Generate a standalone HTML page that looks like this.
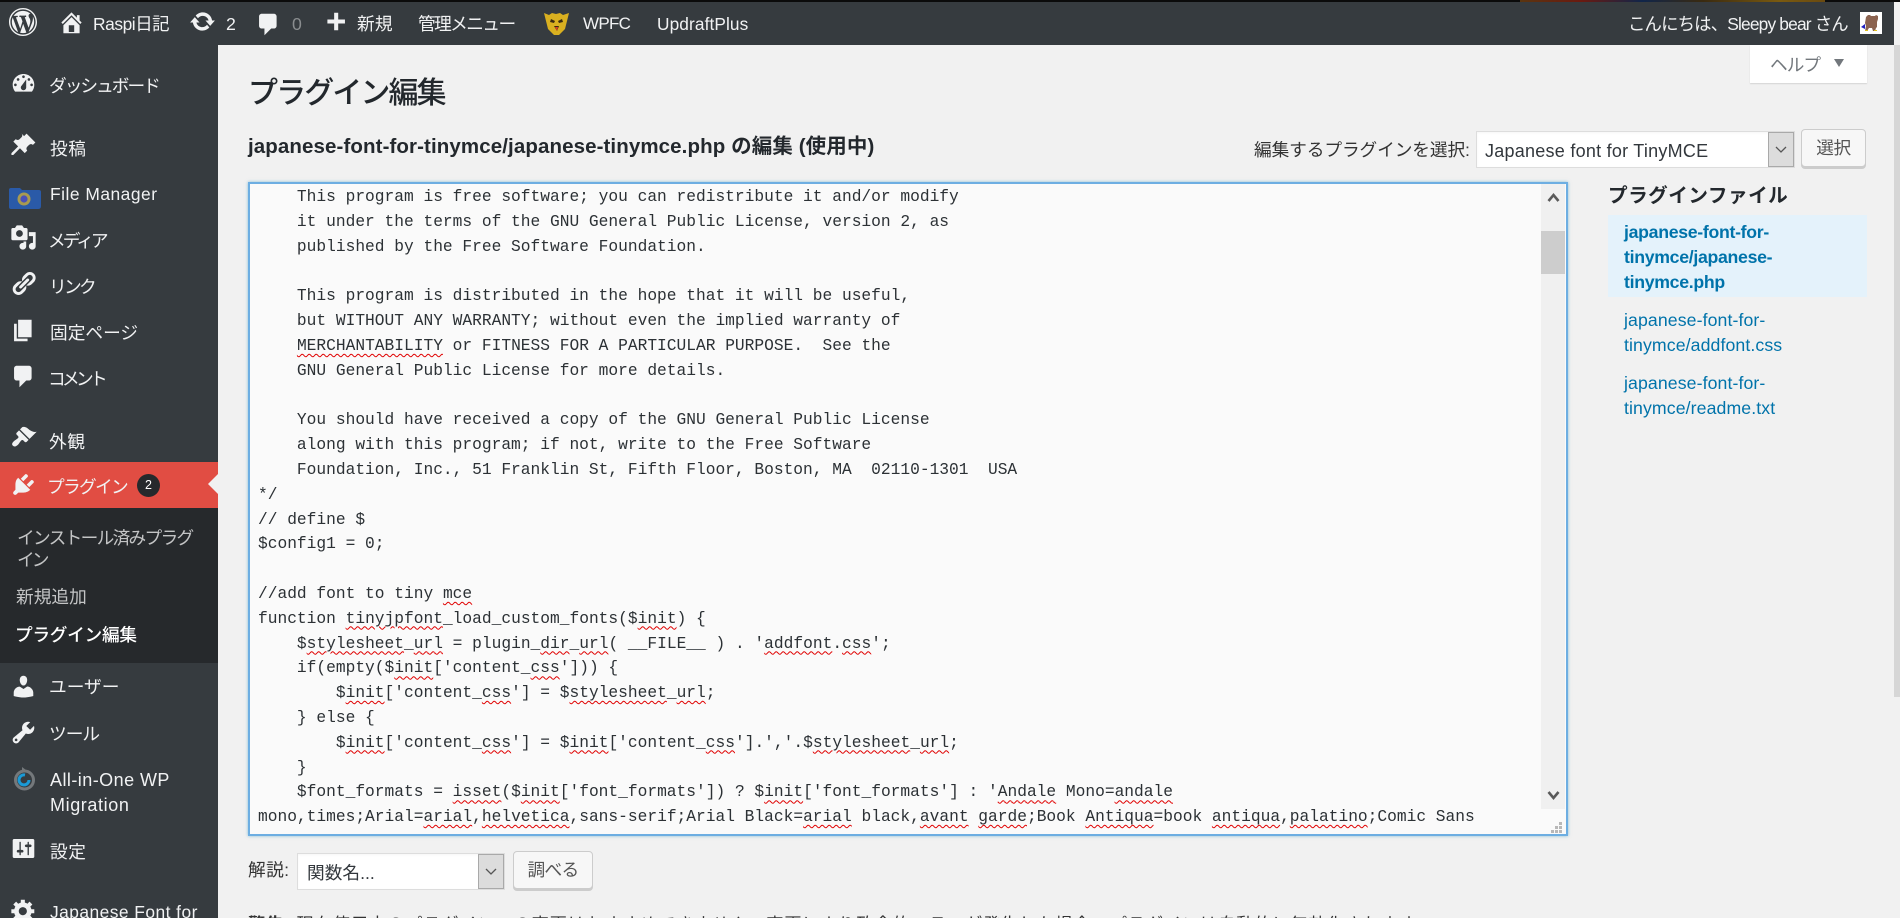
<!DOCTYPE html>
<html lang="ja">
<head>
<meta charset="utf-8">
<title>プラグイン編集</title>
<style>
html,body{margin:0;padding:0;width:1900px;height:918px;overflow:hidden;background:#f1f1f1}
body{position:relative;font-family:"Liberation Sans","Noto Sans CJK JP",sans-serif;font-size:17.7px;color:#444}
div,span,svg,pre{box-sizing:border-box}
.a{position:absolute}
.t{position:absolute;white-space:nowrap;line-height:24px;height:24px}
#bar{position:absolute;left:0;top:0;width:1894px;height:45px;background:#363b3f}
#strip{position:absolute;left:0;top:0;width:1900px;height:2px;background:#0b0b0b}
#strip2{position:absolute;left:1520px;top:0;width:305px;height:2px;background:linear-gradient(90deg,#5a3510,#6b1a10 20%,#10254a 40%,#3a2a10 60%,#7a5a10 85%,#6a4a10)}
#side{position:absolute;left:0;top:45px;width:218px;height:873px;background:#363b3f}
#cur{position:absolute;left:0;top:462px;width:218px;height:46px;background:#e14d43}
#sub{position:absolute;left:0;top:508px;width:218px;height:155px;background:#26292c}
.w{color:#f1f2f3}
.b svg,svg.i{position:absolute;fill:#f1f2f3}
.m{color:#f1f2f3}
.s{color:#c3c4c5}
#ed{position:absolute;left:248px;top:182px;width:1320px;height:654px;background:#fafafa;border:2px solid #6daee2;box-shadow:0 0 3px rgba(30,140,190,.5);overflow:hidden}
#code{position:absolute;left:258px;top:185.2px;margin:0;font-family:"Liberation Mono",monospace;font-size:16.23px;line-height:24.8px;color:#2c3135;white-space:pre;height:650px;overflow:hidden;width:1290px;tab-size:4}
#code u{text-decoration:underline wavy #e00000 1px;text-underline-offset:3px}
#sb{position:absolute;left:1541px;top:184px;width:24px;height:625px;background:#f0f0f0}
#th{position:absolute;left:1541px;top:231px;width:24px;height:43px;background:#cdcdcd}
.sel{position:absolute;background:#fff;border:1px solid #ddd;box-shadow:inset 0 1px 2px rgba(0,0,0,.04)}
.arr{position:absolute;background:#dcdcdc;border:1px solid #a9a9a9}
.btn{position:absolute;background:#f7f7f7;border:1px solid #ccc;border-radius:4px;box-shadow:0 2px 0 #ccc;color:#555}
a{color:#0073aa;text-decoration:none}
</style>
</head>
<body>
<div id="side"></div>
<div id="cur"></div>
<div id="sub"></div>
<div id="bar"></div>
<div id="strip"></div>
<div id="strip2"></div>

<!-- page scrollbar -->
<div class="a" style="left:1894px;top:2px;width:6px;height:916px;background:#f1f1f1"></div>
<div class="a" style="left:1894px;top:45px;width:6px;height:652px;background:#d6d6d6"></div>

<!-- admin bar icons -->
<svg class="i" style="left:9px;top:8px;width:28px;height:28px" viewBox="0 0 20 20"><path fill-rule="evenodd" d="M20 10c0-5.52-4.48-10-10-10S0 4.48 0 10s4.48 10 10 10 10-4.48 10-10zM10 1.01c4.96 0 8.99 4.03 8.99 8.99s-4.03 8.99-8.99 8.99S1.01 14.96 1.01 10 5.04 1.01 10 1.01zM8.01 14.82L4.96 6.61c.49-.03 1.05-.08 1.05-.08.43-.05.38-1.01-.06-.99 0 0-1.29.1-2.13.1-.15 0-.33 0-.52-.01 1.44-2.17 3.9-3.6 6.7-3.6 2.09 0 3.99.79 5.41 2.09-.6-.08-1.45.35-1.45 1.42 0 .66.38 1.22.79 1.88.31.54.5 1.22.5 2.21 0 1.34-1.27 4.48-1.27 4.48l-2.71-7.5c.48-.03.75-.16.75-.16.43-.05.38-1.1-.05-1.08 0 0-1.3.11-2.14.11-.78 0-2.11-.11-2.11-.11-.43-.02-.48 1.06-.05 1.08l.84.08 1.12 3.04zm6.02 2.15L16.64 10s.67-1.69.39-3.81c.63 1.14.94 2.42.94 3.81 0 2.96-1.56 5.58-3.94 6.97zM2.68 6.77L6.5 17.25c-2.67-1.3-4.47-4.08-4.47-7.25 0-1.16.2-2.23.65-3.23zm7.45 4.53l2.29 6.25c-.75.27-1.57.42-2.42.42-.72 0-1.41-.11-2.06-.3z"/></svg>
<svg class="i" style="left:58px;top:9px;width:27px;height:27px" viewBox="0 0 20 20"><path fill-rule="evenodd" d="M16 8.5l1.53 1.53-1.06 1.06L10 4.62l-6.47 6.47-1.06-1.06L10 2.5l4 4v-2h2v4zm-6-2.46l6 5.99V18H4v-5.97zM12 17v-5H8v5h4z"/></svg>
<div class="t w" style="left:93px;top:12px;font-size:17.4px;letter-spacing:-.45px">Raspi日記</div>
<svg class="i" style="left:189px;top:8px;width:27px;height:27px" viewBox="0 0 20 20"><path d="M10.2 3.28c3.53 0 6.43 2.61 6.92 6h2.08l-3.5 4-3.5-4h2.32c-.45-1.97-2.21-3.45-4.32-3.45-1.45 0-2.73.71-3.54 1.78L4.95 5.66C6.23 4.2 8.11 3.28 10.2 3.28zm-.4 13.44c-3.52 0-6.43-2.61-6.92-6H.8l3.5-4c1.17 1.33 2.33 2.67 3.5 4H5.48c.45 1.97 2.21 3.45 4.32 3.45 1.45 0 2.73-.71 3.54-1.78l1.71 1.95c-1.28 1.46-3.15 2.38-5.25 2.38z"/></svg>
<div class="t w" style="left:226px;top:12px">2</div>
<svg class="i" style="left:255px;top:11px;width:27px;height:27px" viewBox="0 0 20 20"><path d="M5 2h9c1.1 0 2 .9 2 2v7c0 1.1-.9 2-2 2h-2l-5 5v-5H5c-1.1 0-2-.9-2-2V4c0-1.1.9-2 2-2z"/></svg>
<div class="t" style="left:292px;top:12px;color:#8a8d8f">0</div>
<svg class="i" style="left:322px;top:10px;width:27px;height:27px" viewBox="0 0 20 20"><path d="M17 7v3h-5v5H9v-5H4V7h5V2h3v5h5z"/></svg>
<div class="t w" style="left:357px;top:12px;font-size:17.7px;letter-spacing:.2px">新規</div>
<div class="t w" style="left:418px;top:12px;font-size:17.7px;letter-spacing:-1.6px">管理メニュー</div>
<svg class="a" style="left:543px;top:12px;width:27px;height:24px" viewBox="0 0 27 24"><path fill="#d9b020" d="M1 1l5 2 3-2 4 1 4-1 3 2 6-2-2 8-2 8-6 6h-5l-6-6-2-8z"/><path fill="#3a2a10" d="M8 7l4 2-1 2-4-1zM19 7l-4 2 1 2 4-1zM11 14h5l-2 5z"/><path fill="#d8402a" d="M12 15h3l-1 4z"/></svg>
<div class="t w" style="left:583px;top:12px;font-size:17px;letter-spacing:-.7px">WPFC</div>
<div class="t w" style="left:657px;top:12px;font-size:17.3px;letter-spacing:.1px">UpdraftPlus</div>
<div class="t w" style="left:1628px;top:12px;font-size:17.4px;letter-spacing:-.85px">こんにちは、Sleepy bear さん</div>
<svg class="a" style="left:1860px;top:12px;width:22px;height:22px" viewBox="0 0 22 22"><rect width="22" height="22" fill="#fff"/><path fill="#8b6350" d="M6 5l2-2h2l1 1h4l1-1 2 1v3l-1 3v5l-1 1-1 3h-2l-1-3H9l-2 3H5l1-5-1-3z"/><path fill="#2020c0" d="M1 15l4-3v5z"/><path fill="#e0c020" d="M5 18h3v1H5zM14 18h3v1h-3z"/></svg>

<!-- sidebar icons -->
<svg class="i" style="left:10px;top:70px;width:27px;height:27px" viewBox="0 0 20 20"><path fill-rule="evenodd" d="M3.76 16h12.48c1.1-1.37 1.76-3.11 1.76-5 0-4.42-3.58-8-8-8s-8 3.58-8 8c0 1.89.66 3.63 1.76 5zM10 4c.55 0 1 .45 1 1s-.45 1-1 1-1-.45-1-1 .45-1 1-1zM6 6c.55 0 1 .45 1 1s-.45 1-1 1-1-.45-1-1 .45-1 1-1zm8 0c.55 0 1 .45 1 1s-.45 1-1 1-1-.45-1-1 .45-1 1-1zm-5.37 5.55L12 7v6c0 1.1-.9 2-2 2s-2-.9-2-2c0-.57.24-1.08.63-1.45zM4 10c.55 0 1 .45 1 1s-.45 1-1 1-1-.45-1-1 .45-1 1-1zm12 0c.55 0 1 .45 1 1s-.45 1-1 1-1-.45-1-1 .45-1 1-1z"/></svg>
<svg class="i" style="left:10px;top:132px;width:27px;height:27px" viewBox="0 0 20 20"><path d="M10.44 3.02l1.82-1.82 6.54 6.54-1.82 1.82c-.78-.78-2.05-.78-2.83 0l-1.41 1.41c-.78.78-.78 2.05 0 2.83l-1.82 1.82-3.54-3.54-4.95 4.95H1.06v-1.41l4.95-4.95-3.54-3.54 1.82-1.82c.78.78 2.05.78 2.83 0l1.41-1.41c.78-.78.78-2.05 0-2.83z"/></svg>
<svg class="a" style="left:8px;top:187px;width:33px;height:22px" viewBox="0 0 33 22"><path fill="#2a5aa8" d="M1 3q0-2 2-2h9l2 2h17q2 0 2 2v14q0 3-3 3H3q-2 0-2-2z"/><circle cx="16" cy="12" r="6.5" fill="#a89a50"/><circle cx="16" cy="12" r="3.6" fill="#4a50b8"/></svg>
<svg class="i" style="left:10px;top:224px;width:27px;height:27px" viewBox="0 0 20 20"><path fill-rule="evenodd" d="M13 11V4c0-.55-.45-1-1-1h-1.67L9 1H5L3.67 3H2c-.55 0-1 .45-1 1v7c0 .55.45 1 1 1h10c.55 0 1-.45 1-1zM7 4.5c1.38 0 2.5 1.12 2.5 2.5S8.38 9.5 7 9.5 4.5 8.38 4.5 7 5.62 4.5 7 4.5zM14 6h5v10.5c0 1.38-1.12 2.5-2.5 2.5S14 17.88 14 16.5s1.12-2.5 2.5-2.5c.17 0 .34.02.5.05V9h-3V6zm-4 8.05V13h2v3.5c0 1.38-1.12 2.5-2.5 2.5S7 17.88 7 16.5 8.12 14 9.5 14c.17 0 .34.02.5.05z"/></svg>
<svg class="i" style="left:10px;top:270px;width:27px;height:27px" viewBox="0 0 20 20"><path d="M17.74 2.76c1.68 1.69 1.68 4.41 0 6.1l-1.53 1.52c-1.12 1.12-2.7 1.47-4.14 1.09l2.62-2.61.76-.77.76-.76c.84-.84.84-2.2 0-3.04-.84-.85-2.2-.85-3.04 0l-.77.76-3.38 3.38c-.37-1.44-.02-3.02 1.1-4.14l1.52-1.53c1.69-1.68 4.42-1.68 6.1 0zM8.59 13.43l5.34-5.34c.42-.42.42-1.1 0-1.52-.44-.43-1.13-.39-1.53 0l-5.33 5.34c-.42.42-.42 1.1 0 1.52.44.43 1.13.39 1.52 0zm-.76 2.29l4.14-4.15c.38 1.44.03 3.02-1.09 4.14l-1.52 1.53c-1.69 1.68-4.41 1.68-6.1 0-1.68-1.68-1.68-4.42 0-6.1l1.53-1.52c1.12-1.12 2.7-1.47 4.14-1.1l-4.14 4.15c-.85.84-.85 2.2 0 3.05.84.84 2.2.84 3.04 0z"/></svg>
<svg class="i" style="left:10px;top:317px;width:27px;height:27px" viewBox="0 0 20 20"><path d="M6 15V2h10v13H6zm-1 1h8v2H3V5h2v11z"/></svg>
<svg class="i" style="left:10px;top:363px;width:27px;height:27px" viewBox="0 0 20 20"><path d="M5 2h9c1.1 0 2 .9 2 2v7c0 1.1-.9 2-2 2h-2l-5 5v-5H5c-1.1 0-2-.9-2-2V4c0-1.1.9-2 2-2z"/></svg>
<svg class="i" style="left:10px;top:424px;width:27px;height:27px" viewBox="0 0 20 20"><path d="M14.48 11.06L7.41 3.99l1.5-1.5c.5-.56 2.3-.47 3.51.32 1.21.8 1.43 1.28 2.91 2.1 1.18.64 2.45 1.26 4.45.85zm-.71.71L6.7 4.7 4.93 6.47c-.39.39-.39 1.02 0 1.41l1.06 1.06c.39.39.39 1.03 0 1.42-.6.6-1.43 1.11-2.21 1.69-.35.26-.7.53-1.01.84-1.05 1.05-1.72 2.08-.67 3.13 1.27 1.27 2.79.35 3.79-.65.31-.31.58-.66.84-1.01.58-.78 1.09-1.61 1.69-2.21.39-.39 1.03-.39 1.42 0l1.06 1.06c.39.39 1.02.39 1.41 0z"/></svg>
<svg class="i" style="left:10px;top:471px;width:27px;height:27px" viewBox="0 0 20 20"><path d="M13.11 4.36L9.87 7.6 8 5.73l3.24-3.24c.35-.34 1.05-.2 1.56.32.52.51.66 1.21.31 1.55zm-8 1.77l.91-1.12 9.01 9.01-1.19.84c-.71.71-2.63 1.16-3.82 1.16H6.14L4.9 17.26c-.59.59-1.54.59-2.12 0-.59-.58-.59-1.53 0-2.12l1.24-1.24v-3.88c0-1.13.4-3.19 1.09-3.89zm7.26 3.97l3.24-3.24c.34-.35 1.04-.21 1.55.31.52.51.66 1.21.31 1.55l-3.24 3.25z"/></svg>
<svg class="i" style="left:10px;top:673px;width:27px;height:27px" viewBox="0 0 20 20"><path d="M10 9.25c-2.27 0-2.73-3.44-2.73-3.44C7 4.02 7.82 2 9.97 2c2.16 0 2.98 2.02 2.71 3.81 0 0-.41 3.44-2.68 3.44zm0 2.57L12.72 10c2.39 0 4.52 2.33 4.52 4.53v2.49s-3.65 1.13-7.24 1.13c-3.65 0-7.24-1.13-7.24-1.13v-2.49c0-2.25 1.94-4.48 4.47-4.48z"/></svg>
<svg class="i" style="left:10px;top:719px;width:27px;height:27px" viewBox="0 0 20 20"><path fill-rule="evenodd" d="M16.68 9.77c-1.34 1.34-3.3 1.67-4.95.99l-5.41 6.52c-.99.99-2.59.99-3.58 0s-.99-2.59 0-3.57l6.52-5.42c-.68-1.65-.35-3.61.99-4.95 1.28-1.28 3.12-1.62 4.72-1.06l-2.89 2.89 2.82 2.82 2.86-2.87c.53 1.58.18 3.39-1.08 4.67zM3.81 16.21c.4.39 1.04.39 1.43 0 .4-.4.4-1.04 0-1.43-.39-.4-1.03-.4-1.43 0-.39.39-.39 1.03 0 1.43z"/></svg>
<svg class="a" style="left:13px;top:766px;width:23px;height:26px" viewBox="0 0 23 26"><circle cx="11.5" cy="14" r="9" fill="none" stroke="#74787b" stroke-width="3"/><path d="M9 1l4 3-4 3z" fill="#74787b"/><path d="M16 14a5 5 0 1 1-4-5" fill="none" stroke="#1a9ad6" stroke-width="3"/></svg>
<svg class="i" style="left:10px;top:835px;width:27px;height:27px" viewBox="0 0 20 20"><path fill-rule="evenodd" d="M18 16V4c0-.55-.45-1-1-1H3c-.55 0-1 .45-1 1v12c0 .55.45 1 1 1h14c.55 0 1-.45 1-1zM8 11h1c.55 0 1 .45 1 1s-.45 1-1 1H8v1.5c0 .28-.22.5-.5.5s-.5-.22-.5-.5V13H6c-.55 0-1-.45-1-1s.45-1 1-1h1V5.5c0-.28.22-.5.5-.5s.5.22.5.5V11zm5-2h-1c-.55 0-1-.45-1-1s.45-1 1-1h1V5.5c0-.28.22-.5.5-.5s.5.22.5.5V7h1c.55 0 1 .45 1 1s-.45 1-1 1h-1v5.5c0 .28-.22.5-.5.5s-.5-.22-.5-.5V9z"/></svg>
<svg class="i" style="left:10px;top:897px;width:27px;height:27px" viewBox="0 0 20 20"><path fill-rule="evenodd" d="M18 12h-2.18c-.17.7-.44 1.35-.81 1.93l1.54 1.54-2.1 2.1-1.54-1.54c-.58.36-1.23.63-1.91.79V19H8v-2.18c-.68-.16-1.33-.43-1.91-.79l-1.54 1.54-2.12-2.12 1.54-1.54c-.36-.58-.63-1.23-.79-1.91H1V9.03h2.17c.16-.7.44-1.35.8-1.94L2.43 5.55l2.1-2.1 1.54 1.54c.58-.37 1.24-.64 1.93-.81V2h3v2.18c.68.16 1.33.43 1.91.79l1.54-1.54 2.12 2.12-1.54 1.54c.36.59.64 1.24.8 1.94H18V12zm-8.5 1.5c1.66 0 3-1.34 3-3s-1.34-3-3-3-3 1.34-3 3 1.34 3 3 3z"/></svg>

<!-- sidebar labels -->
<div class="t m" style="left:49px;top:74px;letter-spacing:-2px">ダッシュボード</div>
<div class="t m" style="left:50px;top:137px;letter-spacing:.5px">投稿</div>
<div class="t m" style="left:50px;top:182px;font-size:17.4px;letter-spacing:.5px">File Manager</div>
<div class="t m" style="left:48px;top:229px;letter-spacing:-3px">メディア</div>
<div class="t m" style="left:49px;top:275px;letter-spacing:-2.7px">リンク</div>
<div class="t m" style="left:50px;top:321px">固定ページ</div>
<div class="t m" style="left:48px;top:367px;letter-spacing:-3.7px">コメント</div>
<div class="t m" style="left:49px;top:430px;letter-spacing:.5px">外観</div>
<div class="t w" style="left:47px;top:475px;letter-spacing:-1.7px">プラグイン</div>
<div class="a" style="left:137px;top:474px;width:23px;height:23px;border-radius:50%;background:#26292c;color:#fff;font-size:12.5px;line-height:23px;text-align:center">2</div>
<div class="a" style="left:208px;top:474px;width:0;height:0;border-top:10px solid transparent;border-bottom:10px solid transparent;border-right:10px solid #f1f1f1"></div>
<div class="t s" style="left:17px;top:526px;letter-spacing:-1.7px">インストール済みプラグ</div>
<div class="t s" style="left:17px;top:548px;letter-spacing:-3px">イン</div>
<div class="t s" style="left:16px;top:585px">新規追加</div>
<div class="t" style="left:15px;top:623px;color:#fff;font-weight:500;letter-spacing:-.3px">プラグイン編集</div>
<div class="t m" style="left:49px;top:675px">ユーザー</div>
<div class="t m" style="left:49px;top:722px;letter-spacing:-1px">ツール</div>
<div class="t m" style="left:50px;top:768px;font-size:18px;letter-spacing:.45px">All-in-One WP</div>
<div class="t m" style="left:50px;top:793px;font-size:18px;letter-spacing:.6px">Migration</div>
<div class="t m" style="left:50px;top:840px;letter-spacing:.5px">設定</div>
<div class="t m" style="left:50px;top:900px;font-size:17.4px;letter-spacing:.45px">Japanese Font for</div>

<!-- heading area -->
<div class="a" style="left:1750px;top:45px;width:117px;height:38px;background:#fff;box-shadow:0 1px 1px rgba(0,0,0,.12)"></div>
<div class="t" style="left:1770px;top:53px;color:#72777c;letter-spacing:-1px">ヘルプ</div>
<div class="a" style="left:1834px;top:59px;width:0;height:0;border-left:5.5px solid transparent;border-right:5.5px solid transparent;border-top:8px solid #72777c"></div>
<div class="t" style="left:248px;top:74px;height:40px;line-height:40px;font-size:30px;font-weight:500;color:#23282d;letter-spacing:-1.9px">プラグイン編集</div>
<div class="t" style="left:248px;top:135px;font-size:20.5px;font-weight:700;color:#23282d;letter-spacing:.1px">japanese-font-for-tinymce/japanese-tinymce.php の編集 (使用中)</div>
<div class="t" style="left:1254px;top:138px;color:#333;letter-spacing:-.1px">編集するプラグインを選択:</div>
<div class="sel" style="left:1476px;top:131px;width:319px;height:37px"></div>
<div class="t" style="left:1485px;top:139px;color:#32373c;font-size:18px;letter-spacing:.25px">Japanese font for TinyMCE</div>
<div class="arr" style="left:1768px;top:132px;width:26px;height:35px"></div>
<svg class="a" style="left:1774px;top:145px;width:14px;height:9px" viewBox="0 0 14 9"><path d="M2 2l5 5 5-5" fill="none" stroke="#555" stroke-width="1.3"/></svg>
<div class="btn" style="left:1801px;top:129px;width:65px;height:38px;line-height:36px;text-align:center;letter-spacing:-.5px">選択</div>

<!-- editor -->
<div id="ed"></div>
<pre id="code">    This program is free software; you can redistribute it and/or modify
    it under the terms of the GNU General Public License, version 2, as
    published by the Free Software Foundation.

    This program is distributed in the hope that it will be useful,
    but WITHOUT ANY WARRANTY; without even the implied warranty of
    <u>MERCHANTABILITY</u> or FITNESS FOR A PARTICULAR PURPOSE.  See the
    GNU General Public License for more details.

    You should have received a copy of the GNU General Public License
    along with this program; if not, write to the Free Software
    Foundation, Inc., 51 Franklin St, Fifth Floor, Boston, MA  02110-1301  USA
*/
// define $
$config1 = 0;

//add font to tiny <u>mce</u>
function <u>tinyjpfont</u>_load_custom_fonts($<u>init</u>) {
    $<u>stylesheet</u>_<u>url</u> = plugin_<u>dir</u>_<u>url</u>( __FILE__ ) . '<u>addfont</u>.<u>css</u>';
    if(empty($<u>init</u>['content_<u>css</u>'])) {
        $<u>init</u>['content_<u>css</u>'] = $<u>stylesheet</u>_<u>url</u>;
    } else {
        $<u>init</u>['content_<u>css</u>'] = $<u>init</u>['content_<u>css</u>'].','.$<u>stylesheet</u>_<u>url</u>;
    }
    $font_formats = <u>isset</u>($<u>init</u>['font_formats']) ? $<u>init</u>['font_formats'] : '<u>Andale</u> Mono=<u>andale</u>
mono,times;Arial=<u>arial</u>,<u>helvetica</u>,sans-serif;Arial Black=<u>arial</u> black,<u>avant</u> <u>garde</u>;Book <u>Antiqua</u>=book <u>antiqua</u>,<u>palatino</u>;Comic Sans</pre>
<div id="sb"></div>
<div id="th"></div>
<svg class="a" style="left:1547px;top:192px;width:13px;height:11px" viewBox="0 0 13 11"><path d="M1.5 9l5-6 5 6" fill="none" stroke="#5a5a5a" stroke-width="2.6"/></svg>
<svg class="a" style="left:1547px;top:790px;width:13px;height:11px" viewBox="0 0 13 11"><path d="M1.5 2l5 6 5-6" fill="none" stroke="#5a5a5a" stroke-width="2.6"/></svg>
<svg class="a" style="left:1551px;top:822px;width:12px;height:12px" viewBox="0 0 12 12"><path fill="#b8b8b8" d="M8 0h3v3H8zM4 4h3v3H4zM8 4h3v3H8zM0 8h3v3H0zM4 8h3v3H4zM8 8h3v3H8z"/></svg>

<!-- files -->
<div class="t" style="left:1608px;top:184px;font-size:19.6px;font-weight:700;color:#23282d;letter-spacing:.5px">プラグインファイル</div>
<div class="a" style="left:1608px;top:215px;width:259px;height:82px;background:#e4f2fb"></div>
<div class="t" style="left:1624px;top:220px;font-weight:700;font-size:17.7px;letter-spacing:-.3px"><a>japanese-font-for-</a></div>
<div class="t" style="left:1624px;top:245px;font-weight:700;font-size:17.7px;letter-spacing:-.3px"><a>tinymce/japanese-</a></div>
<div class="t" style="left:1624px;top:270px;font-weight:700;font-size:17.7px;letter-spacing:-.3px"><a>tinymce.php</a></div>
<div class="t" style="left:1624px;top:308px;font-size:17.7px;letter-spacing:.1px"><a>japanese-font-for-</a></div>
<div class="t" style="left:1624px;top:333px;font-size:17.7px;letter-spacing:.1px"><a>tinymce/addfont.css</a></div>
<div class="t" style="left:1624px;top:371px;font-size:17.7px;letter-spacing:.1px"><a>japanese-font-for-</a></div>
<div class="t" style="left:1624px;top:396px;font-size:17.7px;letter-spacing:.1px"><a>tinymce/readme.txt</a></div>

<!-- doc lookup -->
<div class="t" style="left:248px;top:858px;color:#333;font-size:17.7px;letter-spacing:.4px">解説:</div>
<div class="sel" style="left:297px;top:853px;width:208px;height:37px"></div>
<div class="t" style="left:307px;top:861px;color:#32373c;letter-spacing:0">関数名...</div>
<div class="arr" style="left:478px;top:854px;width:26px;height:35px"></div>
<svg class="a" style="left:484px;top:867px;width:14px;height:9px" viewBox="0 0 14 9"><path d="M2 2l5 5 5-5" fill="none" stroke="#555" stroke-width="1.3"/></svg>
<div class="btn" style="left:513px;top:851px;width:80px;height:38px;line-height:36px;text-align:center;letter-spacing:-.7px">調べる</div>
<div class="t" style="left:248px;top:912px;color:#333;font-size:17.2px;letter-spacing:.9px"><b>警告:</b> 現在使用中のプラグインへの変更はおすすめできません。変更により致命的エラーが発生した場合、プラグインは自動的に無効化されます。</div>
</body>
</html>
